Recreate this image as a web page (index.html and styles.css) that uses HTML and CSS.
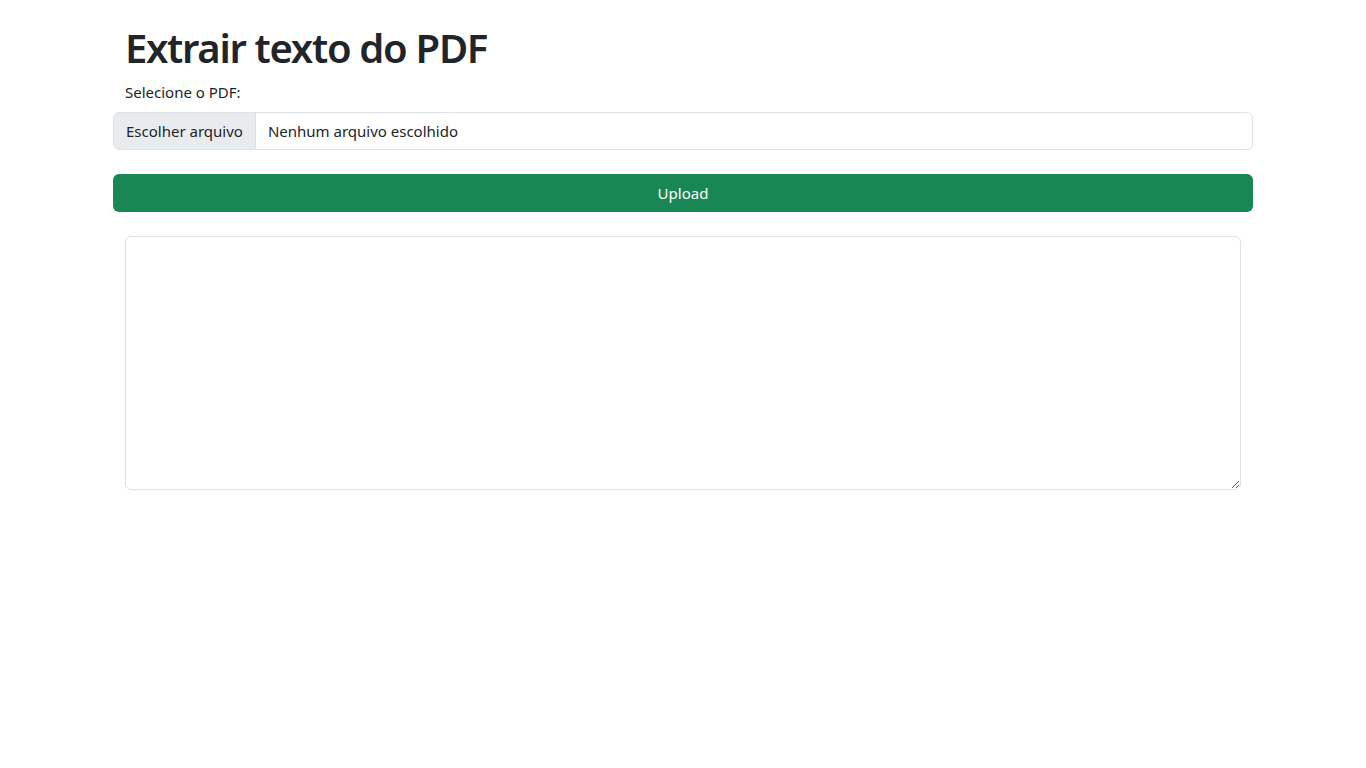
FILE: index.html
```html
<!DOCTYPE html>
<html lang="pt-BR">
<head>
<meta charset="utf-8">
<title>Extrair texto do PDF</title>
<link rel="stylesheet" href="styles.css">
</head>
<body>
<main class="container">
  <h1 class="title">Extrair texto do PDF</h1>
  <form class="upload-form">
    <label class="form-label" for="pdf">Selecione o PDF:</label>
    <div class="file-input" id="pdf">
      <span class="file-btn">Escolher arquivo</span>
      <span class="file-name">Nenhum arquivo escolhido</span>
    </div>
    <button type="button" class="btn-success">Upload</button>
  </form>
  <textarea class="result"></textarea>
</main>
</body>
</html>
```

FILE: styles.css
```css
* { box-sizing: border-box; }
html, body { margin: 0; padding: 0; background: #fff; }
body {
  font-family: "Noto Sans", "Open Sans", "Liberation Sans", sans-serif;
  font-size: 16px;
  line-height: 1.5;
  color: #212529;
}
.container {
  max-width: 1140px;
  margin: 0 auto;
  padding: 24px 12px 0;
}
.title {
  margin: 0 0 8px;
  font-size: 40px;
  line-height: 48px;
  font-weight: 600;
  letter-spacing: -1.3px;
}
.upload-form {
  display: flex;
  flex-direction: column;
  margin: 0 -12px;
}
.form-label {
  display: block;
  margin: 0 0 8px 12px;
  font-size: 15px;
  line-height: 24px;
}
.file-input {
  display: flex;
  height: 38px;
  border: 1px solid #dee2e6;
  border-radius: 6px;
  overflow: hidden;
  font-size: 15px;
  line-height: 24px;
}
.file-btn {
  padding: 6px 12px;
  background: #e9ecef;
  border-right: 1px solid #dee2e6;
  white-space: nowrap;
}
.file-name {
  padding: 6px 12px;
}
.btn-success {
  margin-top: 24px;
  height: 38px;
  border: 0;
  border-radius: 6px;
  background: #198754;
  color: #fff;
  font: inherit;
  font-size: 15px;
}
.result {
  display: block;
  width: 100%;
  height: 254px;
  margin-top: 24px;
  border: 1px solid #dee2e6;
  border-radius: 6px;
  padding: 6px 12px;
  font: inherit;
  resize: vertical;
}
```
